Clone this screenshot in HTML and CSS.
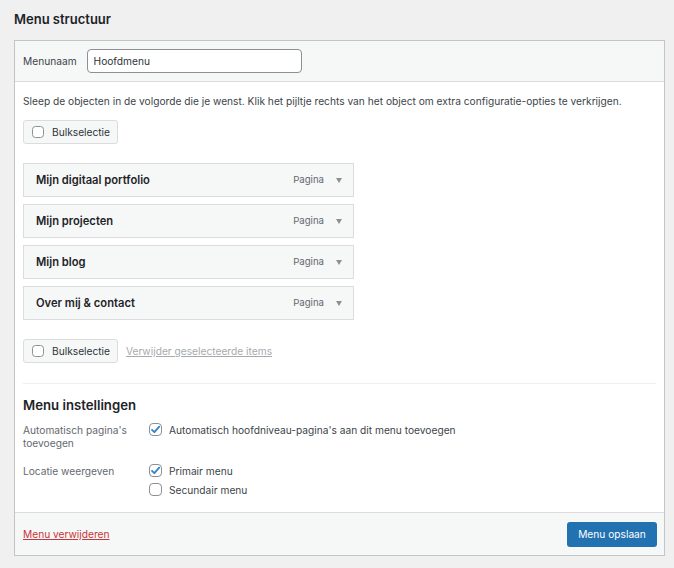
FILE: index.html
```html
<!DOCTYPE html>
<html lang="nl">
<head>
<meta charset="utf-8">
<title>Menu structuur</title>
<link rel="stylesheet" href="styles.css">
</head>
<body>
<h2 class="page-title">Menu structuur</h2>
<div class="menu-box">
  <div class="box-header">
    <label class="name-label">Menunaam</label>
    <input class="name-input" type="text" value="Hoofdmenu">
  </div>
  <div class="box-body">
    <p class="intro">Sleep de objecten in de volgorde die je wenst. Klik het pijltje rechts van het object om extra configuratie-opties te verkrijgen.</p>
    <div class="bulk-row">
      <span class="bulk-btn"><span class="cb small"></span>Bulkselectie</span>
    </div>
    <ul class="items">
      <li class="item"><span class="item-title">Mijn digitaal portfolio</span><span class="item-type">Pagina</span><span class="arrow"></span></li>
      <li class="item"><span class="item-title">Mijn projecten</span><span class="item-type">Pagina</span><span class="arrow"></span></li>
      <li class="item"><span class="item-title">Mijn blog</span><span class="item-type">Pagina</span><span class="arrow"></span></li>
      <li class="item"><span class="item-title">Over mij &amp; contact</span><span class="item-type">Pagina</span><span class="arrow"></span></li>
    </ul>
    <div class="bulk-row bulk-bottom">
      <span class="bulk-btn"><span class="cb small"></span>Bulkselectie</span>
      <a class="remove-link">Verwijder geselecteerde items</a>
    </div>
    <div class="settings">
      <h3 class="settings-title">Menu instellingen</h3>
      <div class="setting">
        <div class="setting-label">Automatisch pagina's<br>toevoegen</div>
        <div class="setting-opts">
          <label class="opt"><span class="cb"><svg viewBox="0 0 13 13" width="13" height="13"><path d="M3 6.8 L5.4 9.2 L10.2 3.6" fill="none" stroke="#3582c4" stroke-width="1.8" stroke-linecap="round" stroke-linejoin="round"/></svg></span>Automatisch hoofdniveau-pagina's aan dit menu toevoegen</label>
        </div>
      </div>
      <div class="setting">
        <div class="setting-label">Locatie weergeven</div>
        <div class="setting-opts">
          <label class="opt"><span class="cb"><svg viewBox="0 0 13 13" width="13" height="13"><path d="M3 6.8 L5.4 9.2 L10.2 3.6" fill="none" stroke="#3582c4" stroke-width="1.8" stroke-linecap="round" stroke-linejoin="round"/></svg></span>Primair menu</label>
          <label class="opt"><span class="cb"></span>Secundair menu</label>
        </div>
      </div>
    </div>
  </div>
  <div class="box-footer">
    <a class="delete-link">Menu verwijderen</a>
    <span class="save-btn">Menu opslaan</span>
  </div>
</div>
</body>
</html>
```
FILE: styles.css
```css
* { box-sizing: border-box; }
html, body { margin: 0; padding: 0; }
body {
  background: #f0f0f1;
  font-family: Inter, "Noto Sans", "Liberation Sans", sans-serif;
  font-size: 10.2px;
  color: #3c434a;
  width: 674px;
  height: 568px;
  overflow: hidden;
}
.page-title {
  margin: 0;
  padding: 9px 0 0 14px;
  height: 40px;
  font-size: 13px;
  font-weight: 600;
  color: #1d2327;
  line-height: 20px;
}
.menu-box {
  margin-left: 14px;
  width: 651px;
  border: 1px solid #c3c4c7;
  background: #fff;
}
.box-header {
  height: 41px;
  background: #f6f7f7;
  border-bottom: 1px solid #dcdcde;
  display: flex;
  align-items: center;
  padding: 0 0 0 8px;
  gap: 10px;
}
.name-label { color: #3c434a; }
.name-input {
  width: 215px;
  height: 24px;
  border: 1px solid #8c8f94;
  border-radius: 4px;
  padding: 0 6px;
  font-family: inherit;
  font-size: 10.2px;
  color: #2c3338;
  background: #fff;
  margin: 0;
}
.box-body { padding: 0 8px; }
.intro {
  margin: 0;
  padding-top: 11px;
  height: 38px;
  line-height: 16px;
  color: #3c434a;
}
.bulk-row { display: flex; align-items: center; gap: 8px; }
.bulk-btn {
  display: inline-flex;
  align-items: center;
  height: 24px;
  width: 95px;
  padding: 0 8px;
  background: #f6f7f7;
  border: 1px solid #dcdcde;
  border-radius: 3px;
  color: #2c3338;
  gap: 8px;
}
.cb {
  display: inline-flex;
  width: 13px;
  height: 13px;
  border: 1px solid #8c8f94;
  border-radius: 4px;
  background: #fff;
  flex: none;
  align-items: center;
  justify-content: center;
}
.cb.small { width: 12px; height: 12px; border-radius: 3.5px; }
.cb svg { display: block; margin: -1px; }
.items { list-style: none; margin: 19px 0 0; padding: 0; display: flex; flex-direction: column; gap: 7px; }
.item {
  width: 331px;
  height: 34px;
  background: #f6f7f7;
  border: 1px solid #dcdcde;
  display: flex;
  align-items: center;
  padding: 0 11px 0 12px;
}
.item-title { flex: 1; font-weight: 600; font-size: 11.2px; color: #1d2327; }
.item-type { color: #646970; font-size: 9.6px; margin-right: 12px; margin-top: -2px; }
.arrow {
  width: 0; height: 0;
  border-left: 3px solid transparent;
  border-right: 3px solid transparent;
  border-top: 5px solid #8c8f94;
}
.bulk-bottom { margin-top: 19px; }
.remove-link { color: #a7aaad; text-decoration: underline; }
.settings {
  margin-top: 20px;
  border-top: 1px solid #f0f0f1;
  padding-bottom: 16px;
}
.settings-title {
  margin: 0;
  padding-top: 11px;
  height: 39px;
  line-height: 20px;
  font-size: 13.2px;
  font-weight: 600;
  color: #1d2327;
}
.setting { display: flex; margin-bottom: 14px; }
.setting:last-child { margin-bottom: 0; }
.setting-label { width: 126px; color: #646970; line-height: 13px; padding-top: 1px; }
.setting-opts { display: flex; flex-direction: column; gap: 6px; }
.opt { display: flex; align-items: center; gap: 7px; color: #3c434a; line-height: 14px; height: 13px; }
.box-footer {
  height: 43px;
  background: #f6f7f7;
  border-top: 1px solid #dcdcde;
  display: flex;
  align-items: center;
  justify-content: space-between;
  padding: 0 7px 0 8px;
}
.delete-link { color: #c9353a; text-decoration: underline; }
.save-btn {
  display: inline-flex;
  align-items: center;
  justify-content: center;
  width: 90px;
  height: 25px;
  background: #2271b1;
  border-radius: 3px;
  color: #fff;
}
```
